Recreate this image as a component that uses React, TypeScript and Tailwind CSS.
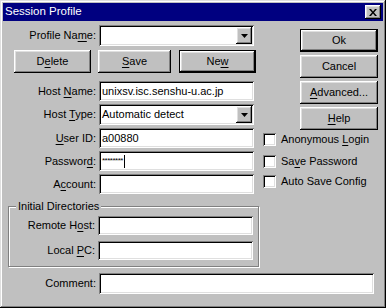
import React from 'react';

const raised =
  'shadow-[inset_-1px_-1px_#000,inset_1px_1px_#fff,inset_-2px_-2px_#808080,inset_2px_2px_#dfdfdf]';
const sunken =
  'shadow-[inset_1px_1px_#808080,inset_-1px_-1px_#fff,inset_2px_2px_#000,inset_-2px_-2px_#dfdfdf]';

function U({ children }: { children: React.ReactNode }) {
  return <span className="underline underline-offset-[2px]">{children}</span>;
}

function Btn({
  children,
  className = '',
  isDefault = false,
}: {
  children: React.ReactNode;
  className?: string;
  isDefault?: boolean;
}) {
  if (isDefault) {
    return (
      <div className={`border border-black ${className}`}>
        <div className={`h-full flex items-center justify-center bg-[#c0c0c0] ${raised}`}>{children}</div>
      </div>
    );
  }
  return (
    <div className={`flex items-center justify-center bg-[#c0c0c0] ${raised} ${className}`}>{children}</div>
  );
}

function Field({ className = '', children }: { className?: string; children?: React.ReactNode }) {
  return (
    <div className={`bg-white flex items-center pl-[3px] ${sunken} ${className}`}>{children}</div>
  );
}

function Combo({ value }: { value?: string }) {
  return (
    <div className={`bg-white flex items-center p-[2px] h-full ${sunken}`}>
      <div className="flex-1 pl-[1px]">{value}</div>
      <div className={`w-[16px] h-full flex items-center justify-center bg-[#c0c0c0] ${raised}`}>
        <svg width="7" height="4" viewBox="0 0 7 4">
          <path d="M0 0h7L3.5 4z" fill="#000" />
        </svg>
      </div>
    </div>
  );
}

function Row({
  label,
  labelW = 'w-[93px]',
  className = '',
  children,
}: {
  label: React.ReactNode;
  labelW?: string;
  className?: string;
  children: React.ReactNode;
}) {
  return (
    <div className={`flex items-center ${className}`}>
      <div className={`${labelW} text-right shrink-0`}>{label}</div>
      <div className="ml-[3px] w-[155px] h-full">{children}</div>
    </div>
  );
}

function Check({ children, className = '' }: { children: React.ReactNode; className?: string }) {
  return (
    <div className={`flex items-center ${className}`}>
      <div className={`w-[13px] h-[13px] bg-white ${sunken}`} />
      <div className="ml-[5px]">{children}</div>
    </div>
  );
}

export default function App() {
  return (
    <div className="w-[386px] h-[308px] font-['Liberation_Sans',Arial,sans-serif] text-[11px] text-black leading-none select-none">
      <div
        className={`w-full h-full bg-[#c0c0c0] p-[3px] shadow-[inset_-1px_-1px_#000,inset_1px_1px_#dfdfdf,inset_-2px_-2px_#808080,inset_2px_2px_#fff]`}
      >
        {/* title bar */}
        <div className="h-[18px] bg-[#000080] flex items-center justify-between pl-[2px] pr-[2px]">
          <span className="text-white text-[11.5px]">Session Profile</span>
          <div className={`w-[16px] h-[14px] bg-[#c0c0c0] flex items-center justify-center ${raised}`}>
            <svg width="8" height="7" viewBox="0 0 8 7">
              <path d="M0 0h2l2 2.5L6 0h2L5 3.5 8 7H6L4 4.5 2 7H0l3-3.5z" fill="#000" />
            </svg>
          </div>
        </div>

        <div className="flex">
          {/* left column */}
          <div className="w-[256px]">
            <Row label={<>Profile Na<U>m</U>e:</>} className="mt-[4px] h-[21px]">
              <Combo />
            </Row>

            <div className="flex mt-[4px] h-[23px]">
              <Btn className="ml-[11px] w-[77px]">
                D<U>e</U>lete
              </Btn>
              <Btn className="ml-[7px] w-[73px]">
                <U>S</U>ave
              </Btn>
              <Btn isDefault className="ml-[8px] w-[77px]">
                Ne<U>w</U>
              </Btn>
            </div>

            <Row label={<>Host <U>N</U>ame:</>} className="mt-[8px] h-[20px]">
              <Field className="h-full">unixsv.isc.senshu-u.ac.jp</Field>
            </Row>
            <Row label={<>Host <U>T</U>ype:</>} className="mt-[3px] h-[21px]">
              <Combo value="Automatic detect" />
            </Row>
            <Row label={<><U>U</U>ser ID:</>} className="mt-[3px] h-[20px]">
              <Field className="h-full">a00880</Field>
            </Row>
            <Row label={<>Passwor<U>d</U>:</>} className="mt-[3px] h-[20px]">
              <Field className="h-full">
                <span className="text-[8px] tracking-[-0.5px]">********</span>
                <span className="ml-[1px] w-[1px] h-[13px] bg-black" />
              </Field>
            </Row>
            <Row label={<>A<U>c</U>count:</>} className="mt-[3px] h-[20px]">
              <Field className="h-full" />
            </Row>

            {/* group box */}
            <div className="relative ml-[5px] mt-[12px] w-[251px] h-[61px] border border-[#808080] shadow-[1px_1px_0_#fff,inset_1px_1px_0_#fff]">
              <span className="absolute left-[7px] top-[-6px] px-[2px] bg-[#c0c0c0]">Initial Directories</span>
              <Row label={<>Remote H<U>o</U>st:</>} labelW="w-[86px]" className="mt-[9px] h-[19px]">
                <Field className="h-full" />
              </Row>
              <Row label={<>Local <U>P</U>C:</>} labelW="w-[86px]" className="mt-[6px] h-[19px]">
                <Field className="h-full" />
              </Row>
            </div>
          </div>

          {/* right column */}
          <div className="flex flex-col">
            <Btn isDefault className="ml-[41px] mt-[8px] w-[78px] h-[23px]">
              Ok
            </Btn>
            <Btn className="ml-[41px] mt-[3px] w-[78px] h-[23px]">Cancel</Btn>
            <Btn className="ml-[41px] mt-[3px] w-[78px] h-[23px]">
              <U>A</U>dvanced...
            </Btn>
            <Btn className="ml-[41px] mt-[3px] w-[78px] h-[23px]">
              <U>H</U>elp
            </Btn>
            <Check className="ml-[4px] mt-[3px]">
              Anonymous <U>L</U>ogin
            </Check>
            <Check className="ml-[4px] mt-[9px]">
              Sa<U>v</U>e Password
            </Check>
            <Check className="ml-[4px] mt-[7px]">Auto Save Config</Check>
          </div>
        </div>

        <div className="flex items-center mt-[6px] h-[21px]">
          <div className="w-[93px] text-right">Comment:</div>
          <Field className="ml-[3px] w-[275px] h-full" />
        </div>
      </div>
    </div>
  );
}
